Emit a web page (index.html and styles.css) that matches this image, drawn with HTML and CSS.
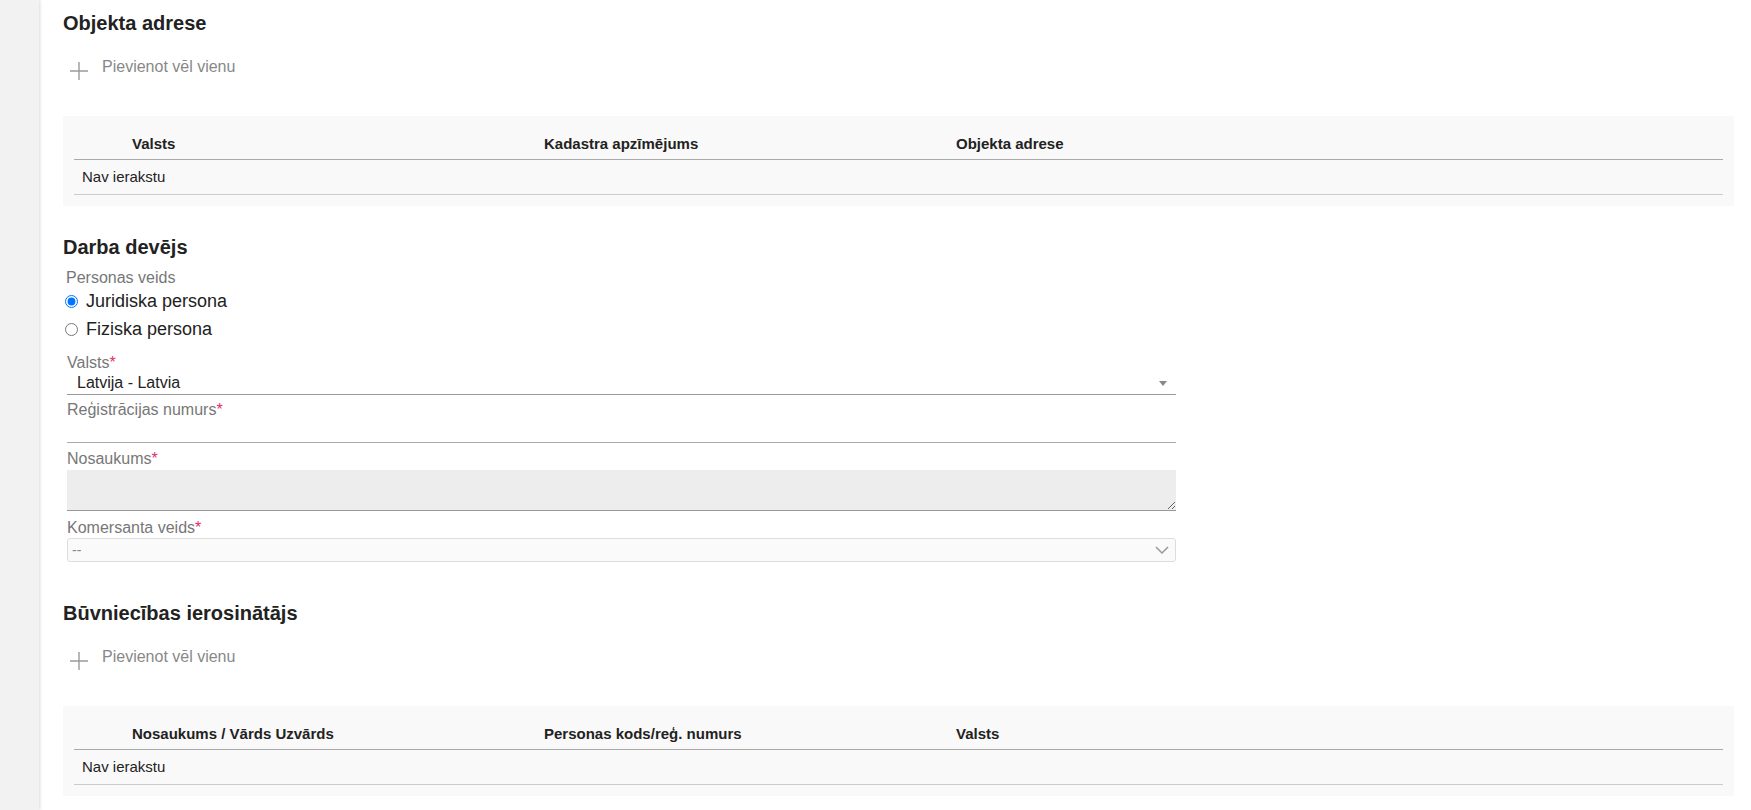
FILE: index.html
```html
<!DOCTYPE html>
<html lang="lv">
<head>
  <meta charset="UTF-8">
  <meta name="viewport" content="width=device-width, initial-scale=1">
  <title>Būvniecības iesniegums</title>
  <link rel="stylesheet" href="styles.css">
</head>
<body>
  <div class="layout">
    <aside class="sidebar"></aside>

    <main class="content">
      <!-- Objekta adrese -->
      <section class="block block-first">
        <h2>Objekta adrese</h2>
        <a class="add-row" href="#">
          <svg class="plus" width="20" height="20" viewBox="0 0 20 20"><path d="M10 1V19M1 10H19"/></svg>
          <span>Pievienot vēl vienu</span>
        </a>
        <div class="grid-panel">
          <table class="grid">
            <colgroup><col class="c-act"><col class="c-col"><col class="c-col"><col></colgroup>
            <thead>
              <tr><th></th><th>Valsts</th><th>Kadastra apzīmējums</th><th>Objekta adrese</th></tr>
            </thead>
            <tbody>
              <tr><td colspan="4">Nav ierakstu</td></tr>
            </tbody>
          </table>
        </div>
      </section>

      <!-- Darba devējs -->
      <section class="block block-employer">
        <h2>Darba devējs</h2>
        <div class="group-label">Personas veids</div>
        <label class="radio-row"><input type="radio" name="ptype" checked> Juridiska persona</label>
        <label class="radio-row"><input type="radio" name="ptype"> Fiziska persona</label>

        <div class="fields">
          <div class="field-label first">Valsts<span class="req">*</span></div>
          <div class="select-line">
            <span>Latvija - Latvia</span>
            <svg width="8" height="5" viewBox="0 0 8 5"><path d="M0 0H8L4 5Z" fill="#888"/></svg>
          </div>

          <div class="field-label">Reģistrācijas numurs<span class="req">*</span></div>
          <input class="line-input" type="text">

          <div class="field-label label-name">Nosaukums<span class="req">*</span></div>
          <textarea class="area-input"></textarea>

          <div class="field-label label-kom">Komersanta veids<span class="req">*</span></div>
          <div class="select-box">
            <span>--</span>
            <svg width="14" height="8" viewBox="0 0 14 8"><path d="M1 1L7 7L13 1" fill="none" stroke="#999" stroke-width="1.5"/></svg>
          </div>
        </div>
      </section>

      <!-- Būvniecības ierosinātājs -->
      <section class="block block-initiator">
        <h2>Būvniecības ierosinātājs</h2>
        <a class="add-row" href="#">
          <svg class="plus" width="20" height="20" viewBox="0 0 20 20"><path d="M10 1V19M1 10H19"/></svg>
          <span>Pievienot vēl vienu</span>
        </a>
        <div class="grid-panel">
          <table class="grid">
            <colgroup><col class="c-act"><col class="c-col"><col class="c-col"><col></colgroup>
            <thead>
              <tr><th></th><th>Nosaukums / Vārds Uzvārds</th><th>Personas kods/reģ. numurs</th><th>Valsts</th></tr>
            </thead>
            <tbody>
              <tr><td colspan="4">Nav ierakstu</td></tr>
            </tbody>
          </table>
        </div>
      </section>
    </main>
  </div>
</body>
</html>
```

FILE: styles.css
```css
* { box-sizing: border-box; }

body {
  margin: 0;
  font-family: "Liberation Sans", Arial, sans-serif;
  color: #222;
  background: #fff;
}

.layout {
  display: flex;
  min-height: 100vh;
}

.sidebar {
  width: 39px;
  flex-shrink: 0;
  background: #f2f2f2;
  box-shadow: 1px 0 3px rgba(0,0,0,0.15);
}

.content {
  flex: 1;
  padding: 0 17px 0 24px;
  overflow: hidden;
}

h2 {
  margin: 0;
  font-size: 20px;
  line-height: 24px;
  font-weight: 700;
  color: #222;
}

.block-first { padding-top: 11px; }
.block-employer { margin-top: 29px; }
.block-initiator { margin-top: 39px; }

/* add link */
.add-row {
  display: flex;
  align-items: flex-start;
  gap: 13px;
  margin-top: 22px;
  padding-left: 6px;
  color: #888;
  font-size: 16px;
  line-height: 20px;
  text-decoration: none;
}

.plus {
  margin-top: 4px;
  stroke: #9a9a9a;
  stroke-width: 1.4;
}

/* grid panels */
.grid-panel {
  margin-top: 35px;
  background: #f9f9f9;
  padding: 0 11px 11px;
}

.grid {
  width: 100%;
  border-collapse: collapse;
  table-layout: fixed;
  font-size: 15px;
}

.c-act { width: 50px; }
.c-col { width: 412px; }

.grid th {
  text-align: left;
  font-weight: 700;
  padding: 19px 8px 6px;
  line-height: 18px;
  border-bottom: 1px solid #aaa;
}

.grid td {
  padding: 8px;
  line-height: 18px;
  border-bottom: 1px solid #ccc;
}

/* employer form */
.group-label {
  margin-top: 10px;
  padding-left: 3px;
  font-size: 16px;
  line-height: 18px;
  color: #777;
}

.radio-row {
  display: flex;
  align-items: center;
  height: 28px;
  font-size: 18px;
  color: #222;
}

.radio-row input {
  width: 13px;
  height: 13px;
  margin: 0 8px 0 2px;
}

.fields {
  width: 1109px;
  margin-left: 4px;
}

.field-label {
  margin-top: 6px;
  font-size: 16px;
  line-height: 18px;
  color: #777;
}

.field-label.first { margin-top: 11px; }
.field-label.label-name { margin-top: 7px; }
.field-label.label-kom { margin-top: 8px; }

.req { color: #e0306a; }

.select-line {
  display: flex;
  align-items: center;
  justify-content: space-between;
  height: 23px;
  padding: 0 9px 0 10px;
  border-bottom: 1px solid #999;
  font-size: 16px;
  color: #222;
}

.line-input {
  display: block;
  width: 100%;
  height: 24px;
  border: none;
  border-bottom: 1px solid #aaa;
  background: transparent;
  outline: none;
}

.area-input {
  display: block;
  width: 100%;
  height: 41px;
  margin-top: 2px;
  border: none;
  border-bottom: 1px solid #999;
  background: #ededed;
  outline: none;
}

.select-box {
  display: flex;
  align-items: center;
  justify-content: space-between;
  height: 24px;
  margin-top: 1px;
  padding: 0 6px 0 4px;
  border: 1px solid #ddd;
  border-radius: 3px;
  background: #fafafa;
  font-size: 14px;
  color: #888;
}
```
